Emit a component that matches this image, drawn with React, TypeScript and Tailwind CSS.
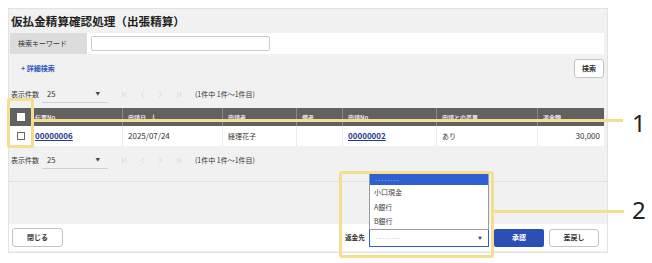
import { ChevronFirst, ChevronLast, ChevronLeft, ChevronRight } from "lucide-react";

const font = "font-['Noto_Sans_CJK_JP','Noto_Sans',sans-serif]";

const columns = [
  { label: "伝票No.", w: "w-[90px]", link: true },
  { label: "申請日", w: "w-[100px]", link: true, arrow: true },
  { label: "申請者", w: "w-[74px]", link: true },
  { label: "備考", w: "w-[46px]", link: false },
  { label: "申請No.", w: "w-[94px]", link: true },
  { label: "申請との差異", w: "w-[101px]", link: true },
  { label: "返金額", w: "w-[66px]", link: true },
];

function Pager() {
  return (
    <div className="flex h-[28px] items-center pl-[2px] text-[7px] text-[#333]">
      <span>表示件数</span>
      <div className="ml-[3px] flex h-[18px] w-[66px] items-center justify-between border-b border-[#cfcfcf] pl-[5px] pr-[8px]">
        <span className="text-[7.5px]">25</span>
        <span className="text-[4.5px] text-[#444]">▼</span>
      </div>
      <div className="ml-[12px] flex items-center gap-[9px] text-[#c4c4c4]">
        <ChevronFirst size={9} strokeWidth={1.5} />
        <ChevronLeft size={9} strokeWidth={1.5} />
        <ChevronRight size={9} strokeWidth={1.5} />
        <ChevronLast size={9} strokeWidth={1.5} />
      </div>
      <span className="ml-[12px]">(1件中 1件～1件目)</span>
    </div>
  );
}

export default function App() {
  return (
    <div className={`relative h-[263px] w-[652px] overflow-hidden bg-white pl-[8px] pt-[8px] ${font}`}>
      <div className="flex h-[245px] w-[600px] flex-col border border-[#e2e2e2] bg-[#f1f1f1]">
        <div className="flex h-[24px] items-center pl-[2px] pt-[1px] text-[11.6px] font-bold text-[#222]">
          仮払金精算確認処理（出張精算）
        </div>

        <div className="ml-[1px] mr-[3px] flex h-[21px] items-center bg-white">
          <div className="flex h-full w-[77px] items-center bg-[#dcdcdc] pl-[8px] text-[7px] text-[#333]">
            検索キーワード
          </div>
          <div className="ml-[4px] h-[15px] w-[179px] rounded-[2px] border border-[#cccccc] bg-white" />
        </div>

        <div className="mr-[3px] flex h-[26px] items-center justify-between pl-[12px] pt-[3px]">
          <span className="text-[7px] font-bold text-[#2f55c0]">+ 詳細検索</span>
          <button className="h-[19px] w-[30px] rounded-[3px] border border-[#c4c4c4] bg-white text-[7px] font-bold text-[#333]">
            検索
          </button>
        </div>

        <Pager />

        <div className="ml-[1px] mr-[3px]">
          <div className="flex h-[18px] bg-[#616161] text-[6px] font-medium text-white">
            <div className="flex w-[23px] items-center justify-center border-r border-[#8a8a8a]">
              <div className="h-[8px] w-[8px] bg-white" />
            </div>
            {columns.map((c, i) => (
              <div
                key={c.label}
                className={`flex ${c.w} items-center ${i === 0 ? "pl-[2px]" : "pl-[5px]"} ${i < columns.length - 1 ? "border-r border-[#8a8a8a]" : ""}`}
              >
                <span className={c.link ? "underline" : ""}>{c.label}</span>
                {c.arrow && <span className="ml-[4px] text-[7px] font-bold">↓</span>}
              </div>
            ))}
          </div>
          <div className="flex h-[20px] bg-white text-[8px] text-[#333]">
            <div className="flex w-[23px] items-center justify-center border-r border-[#ececec]">
              <div className="h-[8px] w-[8px] border border-[#666] bg-white" />
            </div>
            <div className="flex w-[90px] items-center border-r border-[#ececec] pl-[2px] font-bold text-[#24398f] underline">
              00000006
            </div>
            <div className="flex w-[100px] items-center border-r border-[#ececec] pl-[5px]">2025/07/24</div>
            <div className="flex w-[74px] items-center border-r border-[#ececec] pl-[5px] text-[7px]">経理花子</div>
            <div className="w-[46px] border-r border-[#ececec]" />
            <div className="flex w-[94px] items-center border-r border-[#ececec] pl-[5px] font-bold text-[#24398f] underline">
              00000002
            </div>
            <div className="flex w-[101px] items-center border-r border-[#ececec] pl-[5px] text-[7px]">あり</div>
            <div className="flex w-[66px] items-center justify-end pr-[4px]">30,000</div>
          </div>
        </div>

        <Pager />

        <div className="h-[8px] border-b border-[#e0e0e0]" />
        <div className="h-[42px]" />

        <div className="flex h-[27px] items-center justify-between bg-white pl-[3px] pr-[8px]">
          <button className="h-[19px] w-[51px] rounded-[3px] border border-[#c4c4c4] bg-white text-[7px] font-bold text-[#333]">
            閉じる
          </button>
          <div className="flex items-center">
            <span className="text-[6.7px] font-bold text-[#333]">返金先</span>
            <div className="relative ml-[4px] flex h-[18px] w-[120px] items-center justify-between border border-[#2f5fd0] bg-white pl-[6px] pr-[6px]">
              <span className="text-[6px] tracking-[1px] text-[#aaa]">--------</span>
              <span className="text-[4px] text-[#444]">▼</span>
              <div className="absolute bottom-full left-[-1px] flex h-[57px] w-[120px] flex-col border border-[#9a9a9a] bg-white text-[7px] text-[#444]">
                <div className="flex h-[12px] items-center bg-[#2f5fd0] pl-[5px] text-[6px] tracking-[1px] text-[#c9d6f5]">--------</div>
                <div className="flex h-[15px] items-center pl-[4px]">小口現金</div>
                <div className="flex h-[14px] items-center pl-[4px]">A銀行</div>
                <div className="flex h-[15px] items-center pl-[4px]">B銀行</div>
              </div>
            </div>
            <button className="ml-[5px] h-[18px] w-[50px] rounded-[2px] bg-[#2c4fb5] text-[7px] font-bold text-white">
              承認
            </button>
            <button className="ml-[5px] h-[18px] w-[50px] rounded-[3px] border border-[#c4c4c4] bg-white text-[7px] font-bold text-[#333]">
              差戻し
            </button>
          </div>
        </div>
      </div>

      {/* annotation 1 */}
      <div className="absolute left-[7px] top-[98px] h-[50px] w-[27px] rounded-[2px] border-[3px] border-[#f6de90]" />
      <div className="absolute left-[34px] top-[119px] h-[3px] w-[589px] bg-[#f6de90]" />
      <div className="absolute left-[632px] top-[111px] text-[24px] leading-none text-[#222] font-['Noto_Sans',sans-serif]">1</div>

      {/* annotation 2 */}
      <div className="absolute left-[339px] top-[171px] h-[87px] w-[155px] rounded-[3px] border-[3px] border-[#f6de90]" />
      <div className="absolute left-[494px] top-[210px] h-[3px] w-[130px] bg-[#f6de90]" />
      <div className="absolute left-[632px] top-[198px] text-[24px] leading-none text-[#222] font-['Noto_Sans',sans-serif]">2</div>
    </div>
  );
}
